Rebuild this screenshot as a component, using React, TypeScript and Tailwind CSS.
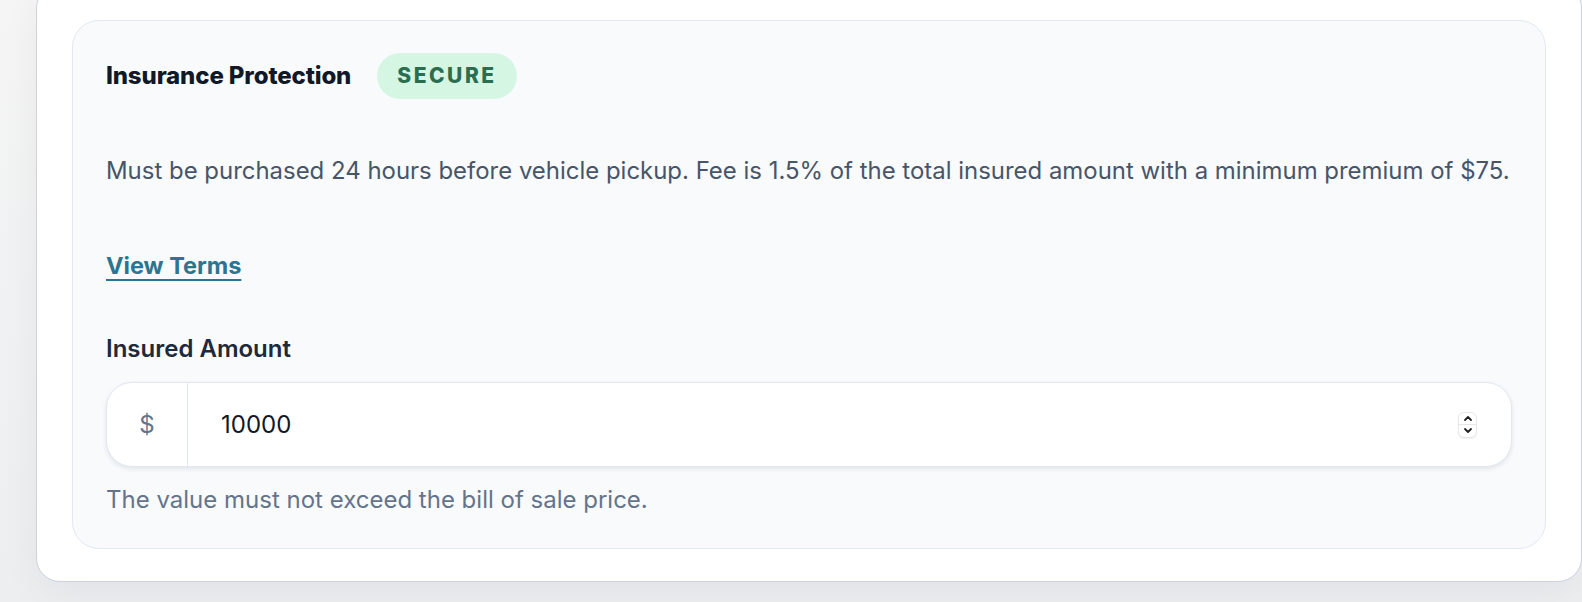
import { useState } from 'react';

// Insurance add-on panel shown inside the checkout card.
function Spinner() {
  return (
    <div className="flex h-[26px] w-[19px] flex-col overflow-hidden rounded-[6px] border border-[#e5e7eb] bg-white shadow-[0_1px_1px_rgba(0,0,0,0.06)]">
      <div className="flex flex-1 items-center justify-center border-b border-[#e5e7eb]">
        <svg width="10" height="7" viewBox="0 0 10 7" fill="none">
          <path d="M2 5l3-3 3 3" stroke="#222" strokeWidth="1.8" strokeLinecap="round" strokeLinejoin="round" />
        </svg>
      </div>
      <div className="flex flex-1 items-center justify-center">
        <svg width="10" height="7" viewBox="0 0 10 7" fill="none">
          <path d="M2 2l3 3 3-3" stroke="#222" strokeWidth="1.8" strokeLinecap="round" strokeLinejoin="round" />
        </svg>
      </div>
    </div>
  );
}

export default function App() {
  const [amount, setAmount] = useState('10000');

  return (
    <div className="h-[602px] overflow-hidden bg-gradient-to-b from-[#f5f5f5] to-[#eceef0] pl-9 font-['Inter',sans-serif] antialiased">
      <div className="-mt-4 rounded-[24px] border border-[#c9d2df] bg-white px-[35px] pb-[32px] pt-[35px] shadow-[0_12px_40px_rgba(15,23,42,0.05)]">
        <section className="rounded-[27px] border border-[#e2e8f0] bg-[#f8fafc] px-[33px] pb-[31px] pt-[32px]">
          <div className="flex h-[46px] items-center gap-[26px]">
            <h3 className="text-[24px] font-extrabold tracking-[-0.005em] text-[#111827]">
              Insurance Protection
            </h3>
            <span className="flex h-[46px] items-center rounded-full bg-[#d6f6e4] pl-5 pr-[20px] text-[21px] font-extrabold tracking-[0.12em] text-[#2b6d4e]">
              SECURE
            </span>
          </div>

          <p className="mt-[55px] whitespace-nowrap text-[23.95px] leading-[34px] text-[#475569]">
            Must be purchased 24 hours before vehicle pickup. Fee is 1.5% of the total insured amount with a
            minimum premium of $75.
          </p>

          <a
            href="#"
            className="mt-[61px] block w-fit text-[23.5px] font-bold leading-[34px] text-[#2b7591] underline decoration-2 underline-offset-[5px]"
          >
            View Terms
          </a>

          <label className="mt-[49px] block text-[24px] font-semibold leading-[34px] text-[#1e293b]">
            Insured Amount
          </label>

          <div className="mt-4 flex h-[85px] items-stretch overflow-hidden rounded-[26px] border border-[#e2e8f0] bg-white shadow-[0_2px_5px_rgba(15,23,42,0.09)]">
            <span className="flex w-[81px] items-center justify-center border-r border-[#e2e8f0] text-[24px] text-[#64748b]">
              $
            </span>
            <div className="flex flex-1 items-center pl-[33px] pr-[34px]">
              <input
                type="text"
                inputMode="numeric"
                value={amount}
                onChange={(e) => setAmount(e.target.value)}
                className="min-w-0 flex-1 bg-transparent text-[24px] text-[#111827] outline-none"
              />
              <Spinner />
            </div>
          </div>

          <p className="mt-4 text-[24px] leading-[34px] text-[#64748b]">
            The value must not exceed the bill of sale price.
          </p>
        </section>
      </div>
    </div>
  );
}
